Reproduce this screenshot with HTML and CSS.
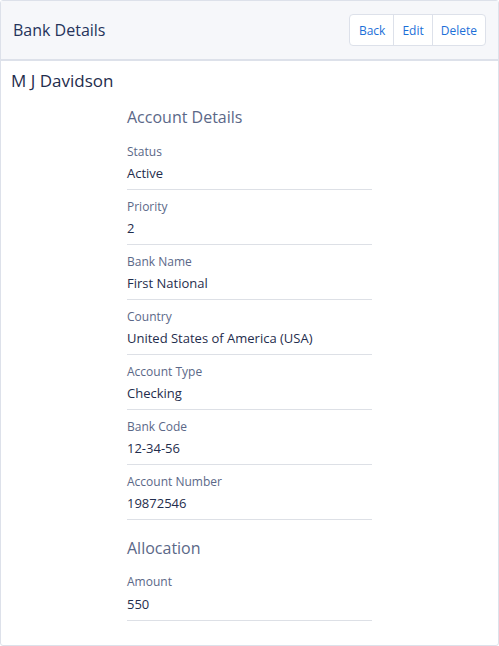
FILE: index.html
```html
<!DOCTYPE html>
<html>
<head>
<meta charset="utf-8">
<link rel="stylesheet" href="styles.css">
</head>
<body>
<div class="panel">
  <div class="panel-header">
    <h1 class="title">Bank Details</h1>
    <div class="btn-group">
      <button class="btn">Back</button>
      <button class="btn">Edit</button>
      <button class="btn">Delete</button>
    </div>
  </div>
  <div class="panel-body">
    <h2 class="name">M J Davidson</h2>
    <div class="details">
      <h3 class="section">Account Details</h3>
      <div class="field first"><div class="label">Status</div><div class="value">Active</div></div>
      <div class="field"><div class="label">Priority</div><div class="value">2</div></div>
      <div class="field"><div class="label">Bank Name</div><div class="value">First National</div></div>
      <div class="field"><div class="label">Country</div><div class="value">United States of America (USA)</div></div>
      <div class="field"><div class="label">Account Type</div><div class="value">Checking</div></div>
      <div class="field"><div class="label">Bank Code</div><div class="value">12-34-56</div></div>
      <div class="field"><div class="label">Account Number</div><div class="value">19872546</div></div>
      <h3 class="section section-2">Allocation</h3>
      <div class="field first-2"><div class="label">Amount</div><div class="value">550</div></div>
    </div>
  </div>
</div>
</body>
</html>
```
FILE: styles.css
```css
* { box-sizing: border-box; }
html, body { margin: 0; padding: 0; background: #fff; }
body { font-family: "Open Sans", "Noto Sans", sans-serif; color: #1f2d4d; }
.panel {
  width: 499px;
  height: 646px;
  border: 1px solid #dde1ea;
  border-radius: 3px;
  display: flex;
  flex-direction: column;
}
.panel-header {
  height: 60px;
  flex: none;
  background: #f6f7fa;
  border-bottom: 2px solid #dde1ea;
  display: flex;
  align-items: center;
  justify-content: space-between;
  padding: 0 12px 0 12px;
}
.title {
  margin: 0;
  font-size: 16px;
  font-weight: 400;
  color: #25335a;
}
.btn-group {
  display: flex;
  border: 1px solid #dde1ea;
  border-radius: 4px;
  background: #fff;
  height: 32px;
}
.btn {
  font-family: inherit;
  font-size: 12px;
  color: #1c6fd8;
  background: none;
  border: none;
  border-left: 1px solid #dde1ea;
  padding: 0 8px;
}
.btn:first-child { border-left: none; padding-left: 9px; }
.panel-body { padding: 7px 10px 0; }
.name {
  margin: 0;
  font-size: 17px;
  font-weight: 400;
  line-height: 26px;
  color: #1f2d4d;
}
.details {
  margin-left: 116px;
  width: 245px;
}
.section {
  margin: 12px 0 0;
  font-size: 16px;
  font-weight: 400;
  line-height: 22px;
  color: #5b6888;
}
.section-2 { margin-top: 17px; }
.field {
  border-bottom: 1px solid #dde0e6;
  padding-top: 8px;
}
.field.first { padding-top: 15px; }
.field.first-2 { padding-top: 14px; }
.field.first-2 .value { padding-top: 5px; }
.label {
  font-size: 12px;
  line-height: 17px;
  color: #5b6888;
}
.value {
  font-size: 13px;
  line-height: 18px;
  padding: 4px 0 7px;
  color: #1f2d4d;
}
```
